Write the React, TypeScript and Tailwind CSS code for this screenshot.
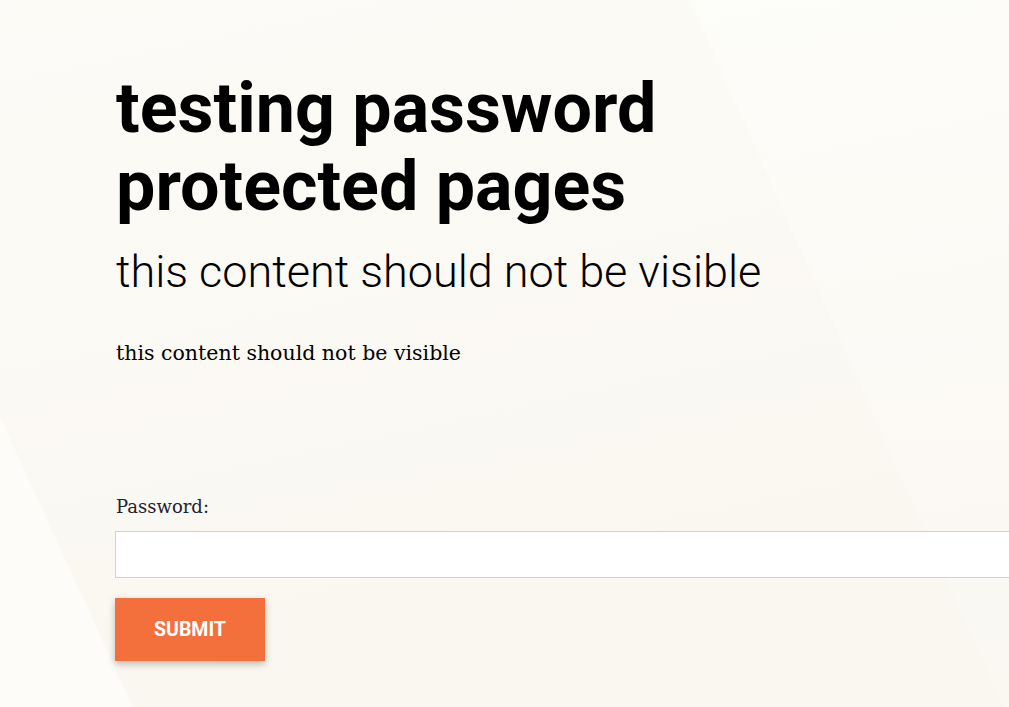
import React from "react";

const App: React.FC = () => {
  return (
    <div className="relative min-h-[707px] w-full overflow-hidden bg-[#faf8f2]">
      {/* soft diagonal light shapes in the background */}
      <svg
        className="pointer-events-none absolute inset-0 h-full w-full"
        viewBox="0 0 1009 707"
        preserveAspectRatio="none"
        aria-hidden="true"
      >
        <defs>
          <linearGradient id="bg" x1="0" y1="0" x2="0.3" y2="1">
            <stop offset="0" stopColor="#fcfbf7" />
            <stop offset="1" stopColor="#faf7f0" />
          </linearGradient>
          <linearGradient id="tr" x1="0" y1="0" x2="0" y2="1">
            <stop offset="0" stopColor="#ffffff" stopOpacity="0.4" />
            <stop offset="1" stopColor="#ffffff" stopOpacity="0.1" />
          </linearGradient>
        </defs>
        <rect x="0" y="0" width="1009" height="707" fill="url(#bg)" />
        <polygon points="690,0 1009,0 1009,707 1003,707" fill="url(#tr)" />
        <polygon points="0,417 133,707 0,707" fill="#fdfcf9" />
      </svg>

      <main className="relative pl-[115px] pt-[69px]">
        <h1 className="pl-px font-['Roboto',sans-serif] text-[70px] font-bold leading-[78px] text-black">
          testing password
          <br />
          protected pages
        </h1>
        <h2 className="mt-[21px] pl-px font-['Roboto',sans-serif] text-[45px] font-light leading-[52px] text-black">
          this content should not be visible
        </h2>
        <p className="mt-[41px] pl-px font-['DejaVu_Serif',serif] text-[20.5px] leading-[28px] text-black">
          this content should not be visible
        </p>

        <form className="mt-[127px] flex flex-col" onSubmit={(e) => e.preventDefault()}>
          <label className="pl-px font-['DejaVu_Serif',serif] text-[18px] leading-[26px] text-[#1f2233]">
            Password:
          </label>
          <input
            type="password"
            className="mt-[11px] h-[47px] w-[1000px] border border-[#d2d2d2] bg-white px-3 outline-none"
          />
          <button
            type="submit"
            className="mt-[20px] h-[63px] w-[150px] bg-[#f3703c] font-['Roboto',sans-serif] text-[19.5px] font-bold uppercase text-white shadow-[0_3px_7px_rgba(0,0,0,0.25)]"
          >
            Submit
          </button>
        </form>
      </main>
    </div>
  );
};

export default App;
